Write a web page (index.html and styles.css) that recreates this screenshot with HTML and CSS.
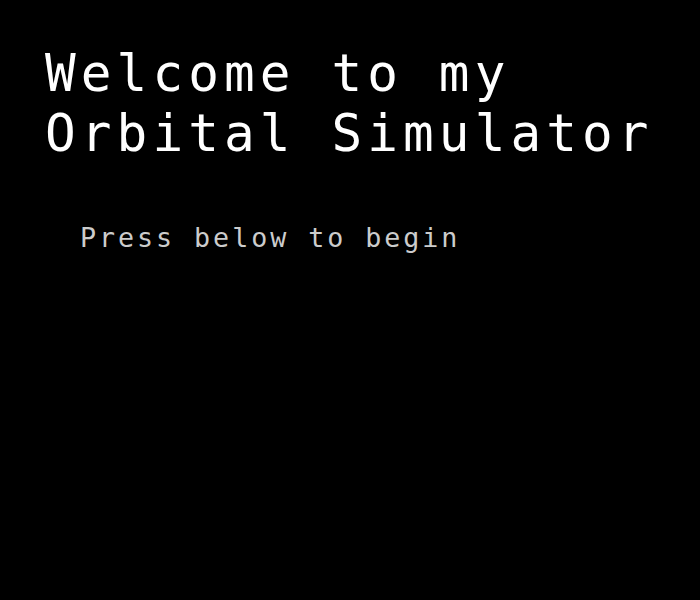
FILE: index.html
```html
<!DOCTYPE html>
<html lang="en">
<head>
<meta charset="utf-8">
<title>Orbital Simulator</title>
<link rel="stylesheet" href="styles.css">
</head>
<body>
<main class="intro">
  <h1 class="title">Welcome to my<br>Orbital Simulator</h1>
  <p class="subtitle">Press below to begin</p>
</main>
</body>
</html>
```
FILE: styles.css
```css
html, body {
  margin: 0;
  padding: 0;
  background: #000;
  height: 100%;
}
.intro {
  padding: 44px 0 0 45px;
  font-family: "DejaVu Sans Mono", monospace;
}
.title {
  margin: 0;
  font-size: 51px;
  line-height: 60px;
  letter-spacing: 5.1px;
  font-weight: normal;
  color: #fff;
}
.subtitle {
  margin: 58px 0 0 35px;
  font-size: 26.7px;
  line-height: 32px;
  letter-spacing: 2.95px;
  color: #cccccc;
}
```
